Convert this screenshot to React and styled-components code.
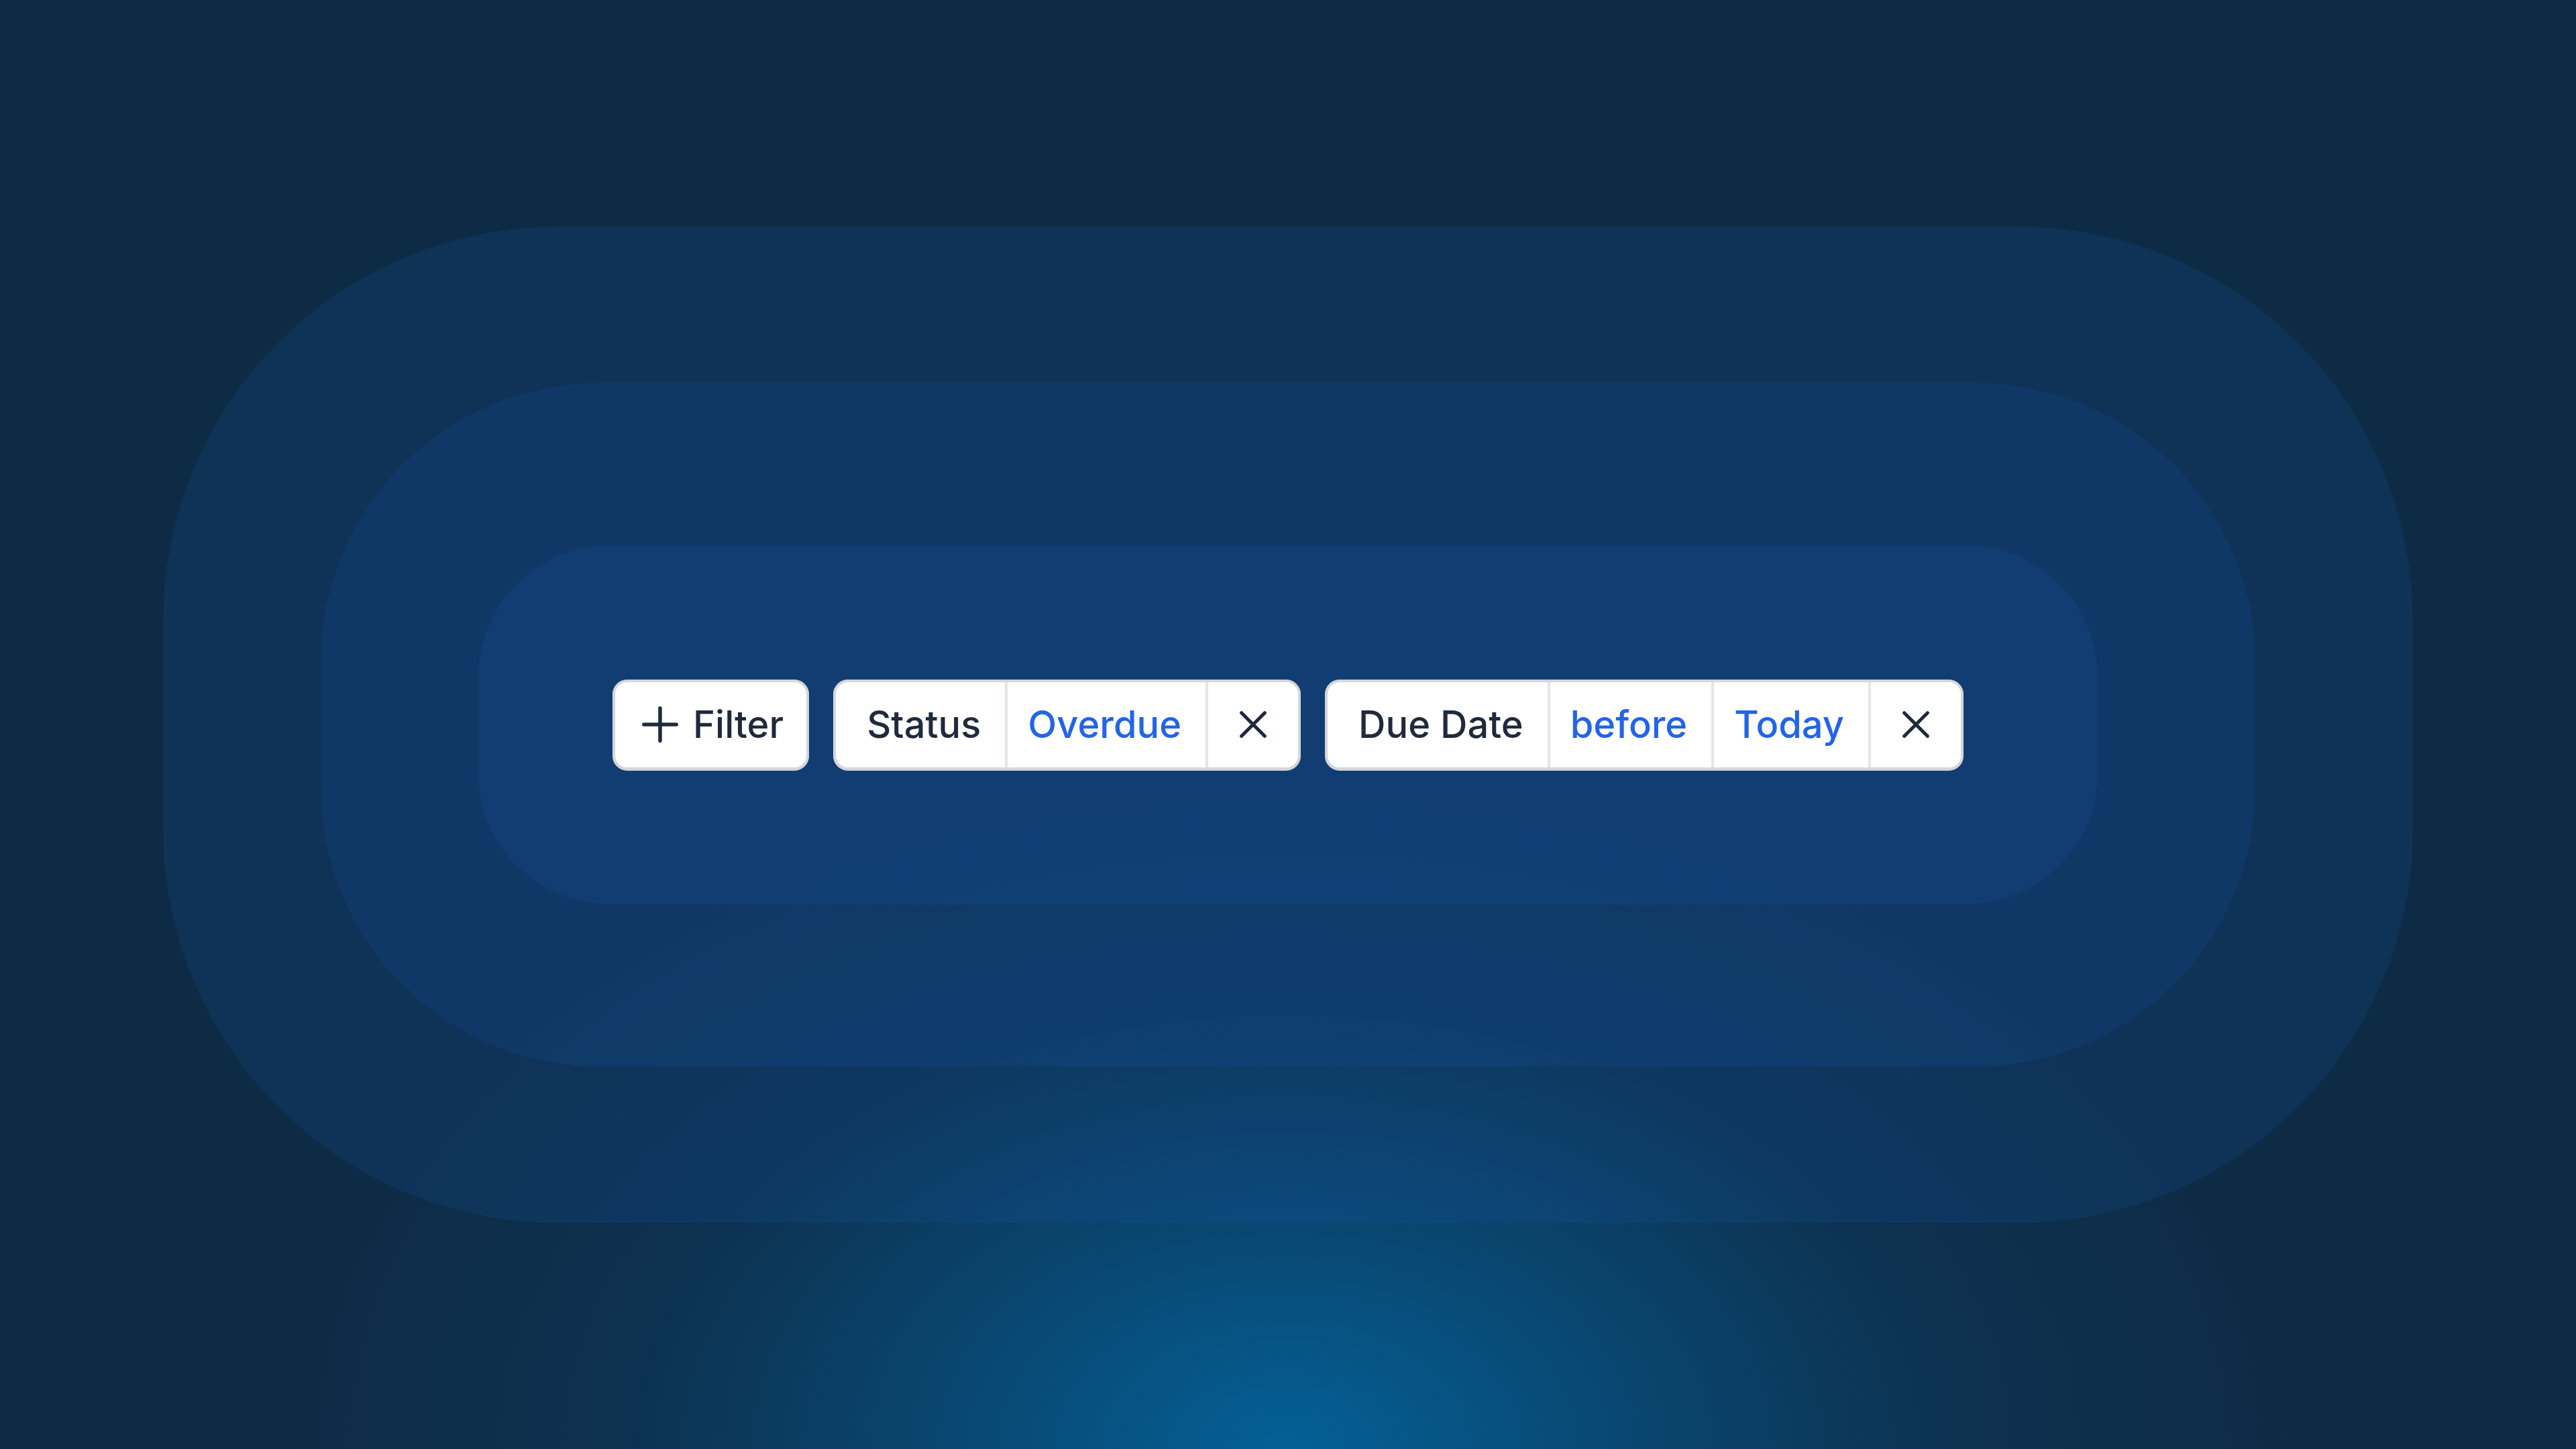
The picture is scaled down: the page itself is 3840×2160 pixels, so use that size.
import React from "react";
import styled, { createGlobalStyle } from "styled-components";

const GlobalStyle = createGlobalStyle`
  html, body, #root {
    margin: 0;
    padding: 0;
    width: 100%;
    height: 100%;
  }
  body {
    font-family: Inter, "Noto Sans", "Liberation Sans", sans-serif;
  }
`;

const Page = styled.div`
  width: 100vw;
  height: 100vh;
  display: flex;
  align-items: center;
  justify-content: center;
  background-color: #0e2b45;
  background-image: radial-gradient(
    ellipse 1500px 1000px at 50% 100%,
    rgba(4, 96, 150, 1) 0%,
    rgba(6, 88, 140, 0.6) 35%,
    rgba(8, 70, 115, 0.25) 65%,
    rgba(8, 70, 115, 0) 100%
  );
`;

const Ring = styled.div`
  display: flex;
  align-items: center;
  justify-content: center;
  padding: ${(p) => p.$pad};
  border-radius: ${(p) => p.$radius}px;
  background: rgba(22, 88, 180, 0.17);
`;

const Row = styled.div`
  display: flex;
  align-items: center;
  gap: 36px;
`;

const FilterButton = styled.button`
  display: flex;
  align-items: center;
  gap: 22px;
  height: 135px;
  box-sizing: border-box;
  padding: 0 34px 0 40px;
  background: #ffffff;
  border: 4px solid #d4d6db;
  border-radius: 22px;
  box-shadow: 0 1px 0 #c6c8ce;
  font-family: Inter, "Noto Sans", "Liberation Sans", sans-serif;
  font-size: 56px;
  font-weight: 500;
  color: #1f2a3c;
  cursor: pointer;
`;

const Chip = styled.div`
  display: flex;
  align-items: stretch;
  height: 135px;
  box-sizing: border-box;
  background: #ffffff;
  border: 4px solid #d4d6db;
  border-radius: 22px;
  box-shadow: 0 1px 0 #c6c8ce;
  overflow: hidden;
`;

const Segment = styled.div`
  display: flex;
  align-items: center;
  padding: 0 36px 0 ${(p) => (p.$field ? 46 : 30)}px;
  font-size: 56px;
  font-weight: 500;
  color: ${(p) => (p.$field ? "#1f2a3c" : "#2364e8")};
  white-space: nowrap;

  & + & {
    border-left: 4px solid #e3e5e9;
  }
`;

const Remove = styled.button`
  display: flex;
  align-items: center;
  justify-content: center;
  margin: 0;
  padding: 0 47px;
  background: #ffffff;
  border: none;
  border-left: 4px solid #e3e5e9;
  cursor: pointer;
`;

const PlusIcon = () => (
  <svg width="54" height="54" viewBox="0 0 54 54" fill="none">
    <path
      d="M27 2.75V51.25M2.75 27H51.25"
      stroke="#1f2a3c"
      strokeWidth="5.5"
      strokeLinecap="round"
    />
  </svg>
);

const CloseIcon = () => (
  <svg width="40" height="40" viewBox="0 0 40 40" fill="none">
    <path
      d="M2.75 2.75L37.25 37.25M37.25 2.75L2.75 37.25"
      stroke="#1f2a3c"
      strokeWidth="5.2"
      strokeLinecap="round"
    />
  </svg>
);

const filters = [
  { field: "Status", values: ["Overdue"] },
  { field: "Due Date", values: ["before", "Today"] },
];

export default function App() {
  return (
    <>
      <GlobalStyle />
      <Page>
        <Ring $pad="233px 235px" $radius={588}>
          <Ring $pad="242px 235px" $radius={416}>
            <Ring $pad="200px" $radius={196}>
              <Row>
                <FilterButton>
                  <PlusIcon />
                  Filter
                </FilterButton>
                {filters.map((f) => (
                  <Chip key={f.field}>
                    <Segment $field>{f.field}</Segment>
                    {f.values.map((v) => (
                      <Segment key={v}>{v}</Segment>
                    ))}
                    <Remove aria-label={`Remove ${f.field} filter`}>
                      <CloseIcon />
                    </Remove>
                  </Chip>
                ))}
              </Row>
            </Ring>
          </Ring>
        </Ring>
      </Page>
    </>
  );
}
